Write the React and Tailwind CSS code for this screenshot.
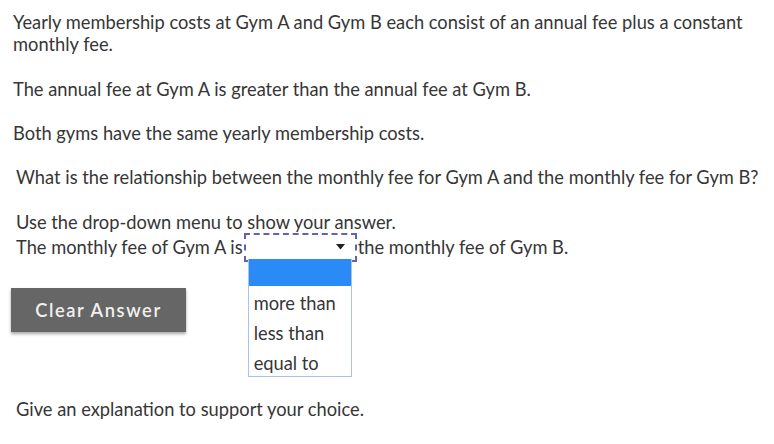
import React from 'react';

const options = ['more than', 'less than', 'equal to'];

export default function App() {
  return (
    <div className="w-[774px] h-[444px] bg-white text-[#363636] text-[18.3px] leading-[22px] overflow-hidden" style={{ fontFamily: 'Lato, "Liberation Sans", sans-serif' }}>
      <div className="pl-[13px] pr-4 pt-[11px]">
        <p>Yearly membership costs at Gym A and Gym B each consist of an annual fee plus a constant monthly fee.</p>
        <p className="mt-[23px]">The annual fee at Gym A is greater than the annual fee at Gym B.</p>
        <p className="mt-[22px]">Both gyms have the same yearly membership costs.</p>
      </div>

      <div className="pl-4 pt-[22px]">
        <p>What is the relationship between the monthly fee for Gym A and the monthly fee for Gym B?</p>
        <p className="mt-[23px]">Use the drop-down menu to show your answer.</p>
        <div className="flex items-center h-[28px]">
          <span>The monthly fee of Gym A is</span>
          <div className="relative ml-[1px] w-[113px] h-[29px] border-2 border-dashed border-[#6262b0] p-[2px]">
            <div className="h-full bg-white flex items-center justify-end pr-[8px]">
              <svg width="9" height="6" viewBox="0 0 9 6"><path d="M0 0h9L4.5 5.5z" fill="#222" /></svg>
            </div>
            <ul className="absolute left-[2px] top-[24px] w-[104px] bg-white border border-[#a8c4ee] border-t-0 z-10">
              <li className="h-[27px] bg-[#2a8af6]"></li>
              {options.map(o => (
                <li key={o} className="h-[30px] pl-[5px] pt-[6px]">{o}</li>
              ))}
            </ul>
          </div>
          <span className="ml-[1px]">the monthly fee of Gym B.</span>
        </div>
      </div>

      <div className="pl-[11px] pt-[27px]">
        <button className="w-[175px] h-[44px] bg-[#666] text-[#f0f0f0] font-semibold tracking-[1.6px] shadow-[0_2px_3px_rgba(0,0,0,0.35)]">
          Clear Answer
        </button>
      </div>

      <p className="pl-4 pt-[66px]">Give an explanation to support your choice.</p>
    </div>
  );
}
